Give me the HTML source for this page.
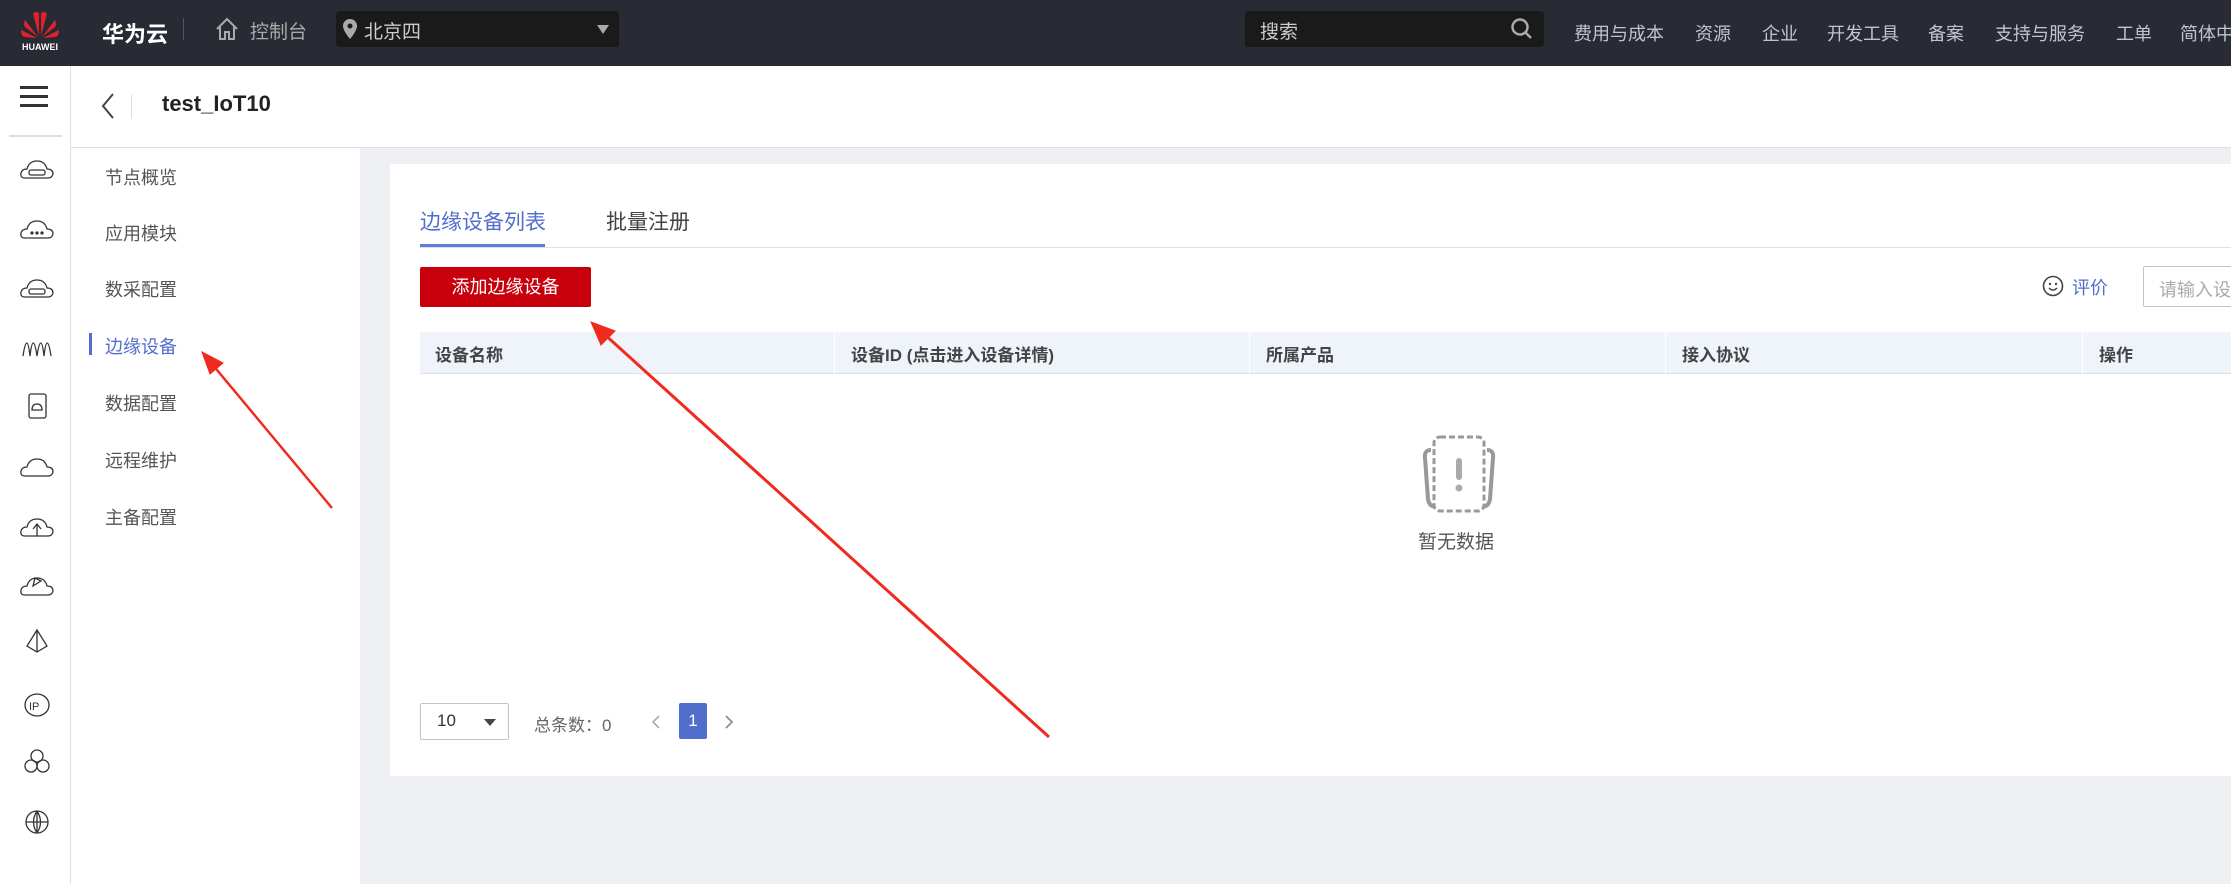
<!DOCTYPE html>
<html><head><meta charset="utf-8"><style>
*{margin:0;padding:0;box-sizing:border-box}
body{width:2231px;height:884px;overflow:hidden;background:#eff0f4;font-family:"Liberation Sans","Noto Sans CJK SC",sans-serif;position:relative}
.a{position:absolute;white-space:nowrap}
.hdr{left:0;top:0;width:2231px;height:66px;background:#282b33}
.nav{color:#c0c4cc;font-size:18px;top:20px}
.rail{left:0;top:66px;width:71px;height:818px;background:#fff;border-right:1px solid #dcdfe6}
.lnav{left:71px;top:148px;width:289px;height:736px;background:#fff}
.li{font-size:18px;color:#555;left:105px}
.th{font-size:17px;font-weight:bold;color:#444;top:341px}
.ic{left:24px;width:28px;height:28px}
</style></head><body>
<div class="a hdr"></div>
<svg class="a" style="left:18px;top:6px" width="44" height="46" viewBox="0 0 44 46">
<g fill="#e0202a"><path d="M21 30 L15 8 Q18 4 21 7Z"/><path d="M23 30 L29 8 Q26 4 23 7Z"/><path d="M20 31 L7 14 Q5 18 7 21Z"/><path d="M24 31 L37 14 Q39 18 37 21Z"/><path d="M19 32 L3 24 Q3 29 6 31Z"/><path d="M25 32 L41 24 Q41 29 38 31Z"/></g>
<text x="22" y="44" fill="#fff" font-size="9" font-family="Liberation Sans" text-anchor="middle" font-weight="bold">HUAWEI</text></svg>
<div class="a" style="left:102px;top:17px;color:#fff;font-size:22px;font-weight:bold">华为云</div>
<div class="a" style="left:183px;top:18px;width:1px;height:22px;background:#555"></div>
<svg class="a" style="left:214px;top:16px" width="26" height="26" viewBox="0 0 26 26"><path d="M3 13 L13 3 L23 13 M6 11 V23 H11 V16 H15 V23 H20 V11" fill="none" stroke="#aaa" stroke-width="2"/></svg>
<div class="a" style="left:250px;top:17px;color:#aaa;font-size:19px">控制台</div>
<div class="a" style="left:336px;top:11px;width:283px;height:36px;background:#1a1a1a;border-radius:3px"></div>
<svg class="a" style="left:343px;top:19px" width="14" height="20" viewBox="0 0 14 20"><path d="M7 0 A7 7 0 0 1 14 7 C14 12 7 20 7 20 C7 20 0 12 0 7 A7 7 0 0 1 7 0Z" fill="#aaa"/><circle cx="7" cy="7" r="2.5" fill="#1a1a1a"/></svg>
<div class="a" style="left:364px;top:17px;color:#ccc;font-size:19px">北京四</div>
<div class="a" style="left:597px;top:25px;border:6px solid transparent;border-top:9px solid #aaa"></div>
<div class="a" style="left:1245px;top:11px;width:299px;height:36px;background:#1a1a1a;border-radius:3px"></div>
<div class="a" style="left:1260px;top:17px;color:#ccc;font-size:19px">搜索</div>
<svg class="a" style="left:1510px;top:17px" width="24" height="24" viewBox="0 0 24 24"><circle cx="10" cy="10" r="7.5" fill="none" stroke="#aaa" stroke-width="2.5"/><path d="M15 15 L21 21" stroke="#aaa" stroke-width="2.5"/></svg>
<div class="a nav" style="left:1574px">费用与成本</div>
<div class="a nav" style="left:1695px">资源</div>
<div class="a nav" style="left:1762px">企业</div>
<div class="a nav" style="left:1827px">开发工具</div>
<div class="a nav" style="left:1928px">备案</div>
<div class="a nav" style="left:1995px">支持与服务</div>
<div class="a nav" style="left:2116px">工单</div>
<div class="a nav" style="left:2180px">简体中</div>

<div class="a" style="left:71px;top:66px;width:2160px;height:82px;background:#fff;border-bottom:1px solid #dcdfe6"></div>
<div class="a rail"></div>
<div class="a" style="left:20px;top:86px;width:28px;height:3px;background:#333;box-shadow:0 9px 0 #333,0 18px 0 #333"></div>
<div class="a" style="left:9px;top:135px;width:53px;height:2px;background:#ddd"></div>
<svg class="a" style="left:20px;top:150px" width="34" height="700" viewBox="0 0 34 700" fill="none" stroke="#333" stroke-width="1.3">
<g id="c"><path d="M5 28 Q0 28 1 23 Q2 19 7 19 Q9 11 17 11 Q25 11 27 19 Q33 19 33 24 Q32 28 28 28Z"/></g>
<rect x="9" y="20" width="16" height="5" rx="2"/>
<use href="#c" y="60"/><circle cx="12" cy="83" r="1" fill="#333"/><circle cx="17" cy="83" r="1" fill="#333"/><circle cx="22" cy="83" r="1" fill="#333"/>
<use href="#c" y="119"/><rect x="9" y="139" width="16" height="5" rx="2"/>
<path d="M3 206 Q7 180 10 206 Q13 180 17 206 Q21 180 24 206 Q27 180 31 206"/>
<rect x="9" y="244" width="17" height="24" rx="2"/><path d="M12 260 Q12 254 17 254 Q22 254 22 260Z"/>
<use href="#c" y="298"/><use href="#c" y="358"/><path d="M17 386 V375 M13 379 L17 374 L21 379"/>
<use href="#c" y="417"/><path d="M13 436 L21 431 L15 428Z"/>
<path d="M17 480 L7 496 L17 502 L27 496Z M17 480 V502"/>
<ellipse cx="17" cy="555" rx="12" ry="11"/><text x="9" y="560" font-size="11" fill="#333" stroke="none" font-family="Liberation Sans">IP</text>
<circle cx="17" cy="606" r="6"/><circle cx="11" cy="616" r="6"/><circle cx="23" cy="616" r="6"/>
<circle cx="17" cy="672" r="11"/><path d="M6 672 H28 M17 661 V683 M17 661 Q10 672 17 683 M17 661 Q24 672 17 683"/>
</svg>

<svg class="a" style="left:100px;top:92px" width="16" height="28" viewBox="0 0 16 28"><path d="M13 2 L3 14 L13 26" fill="none" stroke="#444" stroke-width="2"/></svg>
<div class="a" style="left:131px;top:95px;width:1px;height:24px;background:#ddd"></div>
<div class="a" style="left:162px;top:91px;font-size:22px;font-weight:bold;color:#222">test_IoT10</div>

<div class="a lnav"></div>
<div class="a li" style="top:164px">节点概览</div>
<div class="a li" style="top:220px">应用模块</div>
<div class="a li" style="top:276px">数采配置</div>
<div class="a" style="left:89px;top:333px;width:3px;height:22px;background:#526ecc"></div>
<div class="a li" style="top:333px;color:#526ecc">边缘设备</div>
<div class="a li" style="top:390px">数据配置</div>
<div class="a li" style="top:447px">远程维护</div>
<div class="a li" style="top:504px">主备配置</div>

<div class="a" style="left:390px;top:164px;width:1841px;height:612px;background:#fff"></div>
<div class="a" style="left:420px;top:206px;font-size:21px;color:#526ecc">边缘设备列表</div>
<div class="a" style="left:606px;top:206px;font-size:21px;color:#444">批量注册</div>
<div class="a" style="left:420px;top:247px;width:1811px;height:1px;background:#dfe1e6"></div>
<div class="a" style="left:420px;top:244px;width:125px;height:3px;background:#5d7fdc"></div>
<div class="a" style="left:420px;top:267px;width:171px;height:40px;background:#c7000b;border-radius:2px;color:#fff;font-size:18px;text-align:center;line-height:40px">添加边缘设备</div>
<svg class="a" style="left:2042px;top:275px" width="22" height="22" viewBox="0 0 22 22"><circle cx="11" cy="11" r="9.5" fill="none" stroke="#444" stroke-width="1.6"/><circle cx="8" cy="9" r="1.2" fill="#444"/><circle cx="14" cy="9" r="1.2" fill="#444"/><path d="M7 13 Q11 17 15 13" fill="none" stroke="#444" stroke-width="1.5"/></svg>
<div class="a" style="left:2072px;top:274px;font-size:18px;color:#526ecc">评价</div>
<div class="a" style="left:2143px;top:266px;width:100px;height:41px;border:1px solid #c0c4cc;border-radius:2px"></div>
<div class="a" style="left:2159px;top:276px;font-size:18px;color:#aaa">请输入设</div>

<div class="a" style="left:420px;top:332px;width:1811px;height:42px;background:#eff3fa;border-bottom:1px solid #dcdfe6"></div>
<div class="a" style="left:834px;top:332px;width:1px;height:42px;background:#fff"></div>
<div class="a" style="left:1249px;top:332px;width:1px;height:42px;background:#fff"></div>
<div class="a" style="left:1665px;top:332px;width:1px;height:42px;background:#fff"></div>
<div class="a" style="left:2082px;top:332px;width:1px;height:42px;background:#fff"></div>
<div class="a th" style="left:435px">设备名称</div>
<div class="a th" style="left:851px">设备ID (点击进入设备详情)</div>
<div class="a th" style="left:1266px">所属产品</div>
<div class="a th" style="left:1682px">接入协议</div>
<div class="a th" style="left:2099px">操作</div>

<svg class="a" style="left:1419px;top:433px" width="80" height="82" viewBox="0 0 80 82">
<path d="M12 17 Q5 17 6 25 L9 66 Q10 74 18 74 M68 17 Q75 17 74 25 L71 66 Q70 74 62 74" fill="none" stroke="#999" stroke-width="4"/>
<rect x="15" y="4" width="50" height="74" rx="6" fill="#fff" stroke="#999" stroke-width="3" stroke-dasharray="6 3"/>
<rect x="37" y="25" width="6" height="22" rx="3" fill="#aaa"/><circle cx="40" cy="55" r="3.5" fill="#aaa"/></svg>
<div class="a" style="left:1418px;top:527px;font-size:19px;color:#555">暂无数据</div>

<div class="a" style="left:420px;top:703px;width:89px;height:37px;border:1px solid #c0c4cc;border-radius:2px"></div>
<div class="a" style="left:437px;top:711px;font-size:17px;color:#333">10</div>
<div class="a" style="left:484px;top:719px;border:6px solid transparent;border-top:7px solid #444"></div>
<div class="a" style="left:534px;top:711px;font-size:17px;color:#666">总条数：0</div>
<svg class="a" style="left:650px;top:713px" width="12" height="18" viewBox="0 0 12 18"><path d="M9 3 L3 9 L9 15" fill="none" stroke="#aaa" stroke-width="1.6"/></svg>
<div class="a" style="left:679px;top:703px;width:28px;height:36px;background:#526ecc;border-radius:2px;color:#fff;font-size:17px;text-align:center;line-height:36px">1</div>
<svg class="a" style="left:723px;top:713px" width="12" height="18" viewBox="0 0 12 18"><path d="M3 3 L9 9 L3 15" fill="none" stroke="#888" stroke-width="1.6"/></svg>

<svg class="a" style="left:0;top:0" width="2231" height="884">
<g stroke="#f02a1e" fill="#f02a1e">
<line x1="332" y1="508" x2="212" y2="364" stroke-width="2.5"/><polygon points="202,352 223,363 210,374" />
<line x1="1049" y1="737" x2="603" y2="333" stroke-width="3"/><polygon points="591,322 615,331 601,345"/>
</g></svg>
</body></html>
